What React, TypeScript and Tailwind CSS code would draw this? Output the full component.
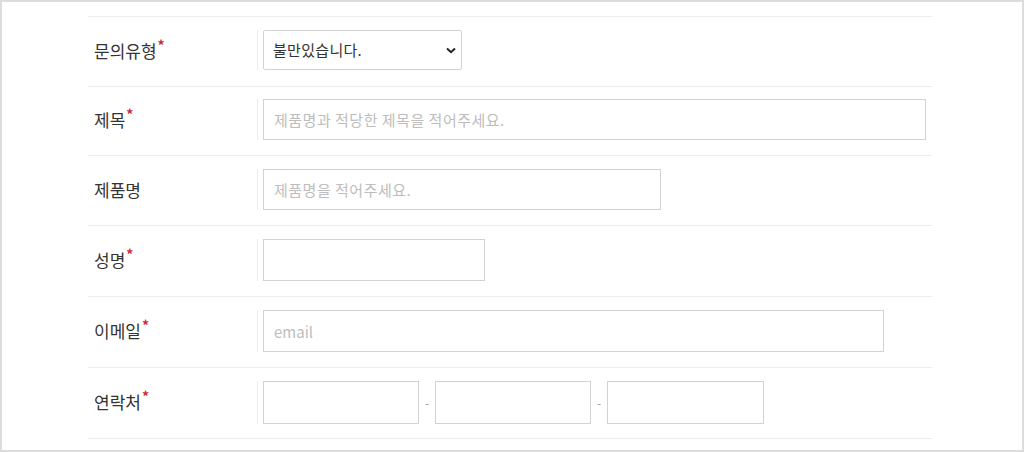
import React from "react";

const font = { fontFamily: '"Noto Sans CJK KR", "Noto Sans", sans-serif' };

function Label({ text, req }: { text: string; req?: boolean }) {
  return (
    <div className="w-[169px] shrink-0 pl-[6px] pb-[2px] flex items-center text-[17px] text-[#333]">
      <div className="flex items-start leading-[20px]">
        <span>{text}</span>
        {req && (
          <span className="relative top-[-3px] text-[#cf2a33] text-[14px] font-bold leading-none ml-[1px]">*</span>
        )}
      </div>
    </div>
  );
}

function Row({
  label,
  req,
  h,
  pt,
  children,
}: {
  label: string;
  req?: boolean;
  h: string;
  pt: string;
  children: React.ReactNode;
}) {
  return (
    <div className={`flex border-b border-[#ececec] ${h}`}>
      <Label text={label} req={req} />
      <div className={pt}>
        <div className="flex items-center border-l border-[#ececec] pl-[5px]">{children}</div>
      </div>
    </div>
  );
}

const inputCls =
  "border border-[#d2d2d2] bg-white px-[10px] text-[15px] tracking-[0.5px] text-[#333] placeholder:text-[#bdbdbd] outline-none";

export default function App() {
  return (
    <div style={font} className="w-[1024px] h-[452px] bg-white border-2 border-[#dcdcdc] overflow-hidden">
      <div className="ml-[86px] mt-[14px] w-[844px] border-t border-[#ececec]">
        <Row label="문의유형" req h="h-[70px]" pt="pt-[13px]">
          <div className="relative">
            <select
              defaultValue="불만있습니다."
              className="appearance-none w-[199px] h-[40px] border border-[#d2d2d2] rounded-[2px] bg-white pl-[9px] text-[15px] tracking-[0.3px] text-[#333] outline-none"
            >
              <option>불만있습니다.</option>
            </select>
            <svg
              className="absolute right-[6px] top-[17px] pointer-events-none"
              width="10"
              height="7"
              viewBox="0 0 10 7"
            >
              <path d="M1 1.5 L5 5.2 L9 1.5" fill="none" stroke="#222" strokeWidth="2" />
            </svg>
          </div>
        </Row>
        <Row label="제목" req h="h-[69px]" pt="pt-[12px]">
          <input className={`${inputCls} w-[663px] h-[41px]`} placeholder="제품명과 적당한 제목을 적어주세요." />
        </Row>
        <Row label="제품명" h="h-[70px]" pt="pt-[13px]">
          <input className={`${inputCls} w-[398px] h-[41px]`} placeholder="제품명을 적어주세요." />
        </Row>
        <Row label="성명" req h="h-[71px]" pt="pt-[13px]">
          <input className={`${inputCls} w-[222px] h-[42px]`} />
        </Row>
        <Row label="이메일" req h="h-[71px]" pt="pt-[13px]">
          <input className={`${inputCls} w-[621px] h-[42px] tracking-normal`} placeholder="email" />
        </Row>
        <Row label="연락처" req h="h-[71px]" pt="pt-[13px]">
          <input className={`${inputCls} w-[156px] h-[43px]`} />
          <span className="w-[16px] text-center text-[12px] text-[#999]">-</span>
          <input className={`${inputCls} w-[156px] h-[43px]`} />
          <span className="w-[16px] text-center text-[12px] text-[#999]">-</span>
          <input className={`${inputCls} w-[157px] h-[43px]`} />
        </Row>
      </div>
    </div>
  );
}
